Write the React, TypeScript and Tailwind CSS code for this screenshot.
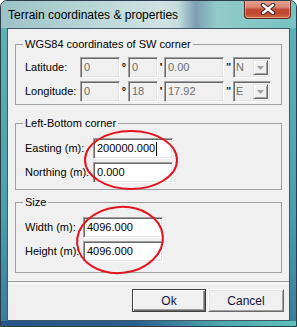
import React from "react";

const sunken =
  "border border-t-[#a0a0a0] border-l-[#a0a0a0] border-b-white border-r-white shadow-[inset_1px_1px_0_#696969,inset_-1px_-1px_0_#e3e3e3]";

function Field({
  w,
  disabled,
  children,
  caret,
}: {
  w: string;
  disabled?: boolean;
  children: React.ReactNode;
  caret?: boolean;
}) {
  return (
    <div
      className={`${w} h-[21px] ${sunken} flex items-center pl-[3px] ${
        disabled ? "bg-[#f0f0f0] text-[#6d6d6d]" : "bg-white text-black"
      }`}
    >
      <span>{children}</span>
      {caret && <span className="w-px h-[14px] bg-black ml-[1px]" />}
    </div>
  );
}

function Combo({ children }: { children: React.ReactNode }) {
  return (
    <div className={`w-[38px] h-[21px] ${sunken} bg-[#f0f0f0] text-[#6d6d6d] flex items-center justify-between pl-[2px] pr-[2px]`}>
      <span>{children}</span>
      <div className="w-[15px] h-[15px] bg-[#f0f0f0] border border-t-[#e3e3e3] border-l-[#e3e3e3] border-b-[#696969] border-r-[#696969] shadow-[inset_1px_1px_0_#fff,inset_-1px_-1px_0_#a0a0a0] flex items-center justify-center">
        <svg width="7" height="4" viewBox="0 0 7 4">
          <path d="M0 0 H7 L3.5 4 Z" fill="#a0a0a0" />
        </svg>
      </div>
    </div>
  );
}

function Group({
  title,
  className,
  children,
}: {
  title: string;
  className: string;
  children: React.ReactNode;
}) {
  return (
    <fieldset className={`border border-[#a0a0a0] pl-[9px] ${className}`}>
      <legend className="px-[2px] -ml-[2px] leading-[13px]">{title}</legend>
      {children}
    </fieldset>
  );
}

export default function App() {
  return (
    <div className="relative w-[297px] h-[327px] font-['Liberation_Sans',Arial,sans-serif] text-[11px] text-black">
      <div className="w-full h-full flex flex-col rounded-t-[7px] border border-[#2c3e4c] overflow-hidden bg-[linear-gradient(to_bottom,#6aaeb3,#4f9fab_60%,#2f6b92)]">
        {/* Title bar */}
        <div className="h-[27px] flex items-start bg-[linear-gradient(to_right,#9cc2c6_0%,#b9d6d7_30%,#cfe3e2_55%,#c4dcdc_60%,#7c9fb4_66%,#93cacb_73%,#76c4c3_100%)]">
          <span className="pl-[7px] pt-[7px] text-[12px] leading-[15px] text-black">
            Terrain coordinates &amp; properties
          </span>
          <div className="ml-auto mr-[5px] -mt-px w-[47px] h-[19px] rounded-b-[4px] border border-t-0 border-[#5e2a22] bg-[linear-gradient(to_bottom,#e7a594_0%,#d98672_40%,#c24a33_52%,#c0462c_75%,#d46a48_100%)] shadow-[inset_0_0_0_1px_rgba(255,220,200,0.45)] flex items-center justify-center">
            <svg width="16" height="12" viewBox="0 0 16 12">
              <path d="M3 2 L13 10 M13 2 L3 10" stroke="#4a2a26" strokeWidth="4.5" strokeLinecap="round" />
              <path d="M3 2 L13 10 M13 2 L3 10" stroke="#ffffff" strokeWidth="2.4" strokeLinecap="round" />
            </svg>
          </div>
        </div>

        {/* Middle */}
        <div className="flex-1 flex px-[6px] bg-[linear-gradient(to_bottom,#5fb0b4,#4aa2ae_60%,#3b7e9c)]">
          <div className="flex-1 border border-[#3f5866] bg-[#f0f0f0] flex flex-col px-[7px] pt-[9px]">
            <Group title="WGS84 coordinates of SW corner" className="pt-[6px] pb-[2px]">
              <div className="flex flex-col gap-[3px]">
                <div className="flex items-center">
                  <span className="w-[55px]">Latitude:</span>
                  <Field w="w-[40px]" disabled>0</Field>
                  <span className="w-[8px] text-center font-bold">°</span>
                  <Field w="w-[30px]" disabled>0</Field>
                  <span className="w-[6px] text-center font-bold">'</span>
                  <Field w="w-[60px]" disabled>0.00</Field>
                  <span className="w-[9px] text-center font-bold text-[#1a2a6a]">"</span>
                  <Combo>N</Combo>
                </div>
                <div className="flex items-center">
                  <span className="w-[55px]">Longitude:</span>
                  <Field w="w-[40px]" disabled>0</Field>
                  <span className="w-[8px] text-center font-bold">°</span>
                  <Field w="w-[30px]" disabled>18</Field>
                  <span className="w-[6px] text-center font-bold">'</span>
                  <Field w="w-[60px]" disabled>17.92</Field>
                  <span className="w-[9px] text-center font-bold text-[#1a2a6a]">"</span>
                  <Combo>E</Combo>
                </div>
              </div>
            </Group>

            <Group title="Left-Bottom corner" className="mt-[12px] pt-[8px] pb-[6px]">
              <div className="flex flex-col gap-[3px]">
                <div className="flex items-center">
                  <span className="w-[68px]">Easting (m):</span>
                  <Field w="w-[80px]" caret>200000.000</Field>
                </div>
                <div className="flex items-center">
                  <span className="w-[68px]">Northing (m):</span>
                  <Field w="w-[80px]">0.000</Field>
                </div>
              </div>
            </Group>

            <Group title="Size" className="mt-[6px] pt-[8px] pb-[10px]">
              <div className="flex flex-col gap-[3px]">
                <div className="flex items-center">
                  <span className="w-[58px]">Width (m):</span>
                  <Field w="w-[80px]">4096.000</Field>
                </div>
                <div className="flex items-center">
                  <span className="w-[58px]">Height (m):</span>
                  <Field w="w-[80px]">4096.000</Field>
                </div>
              </div>
            </Group>

            <div className="mt-[8px] -mx-[7px] h-[2px] border-t border-[#a0a0a0] border-b-0 shadow-[0_1px_0_#fff]" />

            <div className="mt-[6px] flex justify-end gap-[2px] -mr-[2px]">
              <button className="w-[74px] h-[23px] bg-[#f0f0f0] border border-[#404040] shadow-[inset_1px_1px_0_#fff,inset_-1px_-1px_0_#696969,inset_-2px_-2px_0_#a0a0a0] text-[12px] text-[#101040]">
                Ok
              </button>
              <button className="w-[76px] h-[23px] bg-[#f0f0f0] border border-t-white border-l-white border-b-[#696969] border-r-[#696969] shadow-[inset_1px_1px_0_#e3e3e3,inset_-1px_-1px_0_#a0a0a0] text-[12px] text-[#101040]">
                Cancel
              </button>
            </div>
          </div>
        </div>

        {/* Bottom frame */}
        <div className="h-[5px] bg-[linear-gradient(to_right,#24558a,#2a5e8f_45%,#4fa8b0_75%,#5cc2b8)]" />
      </div>

      <svg
        className="absolute inset-0 pointer-events-none"
        width="297"
        height="327"
        viewBox="0 0 297 327"
      >
        <ellipse cx="131" cy="160" rx="46" ry="29" fill="none" stroke="#e3141e" strokeWidth="2" />
        <ellipse cx="120" cy="240" rx="43" ry="33" fill="none" stroke="#e3141e" strokeWidth="2" transform="rotate(-6 120 240)" />
      </svg>
    </div>
  );
}
